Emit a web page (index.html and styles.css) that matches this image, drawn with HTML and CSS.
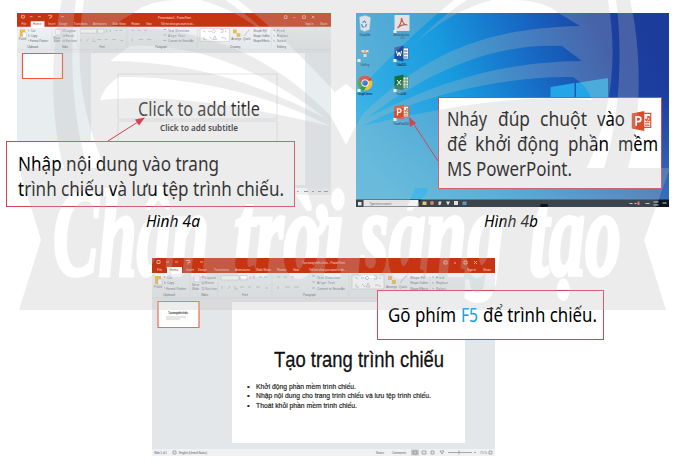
FILE: index.html
```html
<!DOCTYPE html>
<html lang="vi">
<head>
<meta charset="utf-8">
<title>Hình 4</title>
<link rel="stylesheet" href="styles.css">
</head>
<body>
<svg class="defs" width="0" height="0" aria-hidden="true">
  <defs>
    <linearGradient id="sky" x1="0" y1="0.6" x2="1" y2="0.35">
      <stop offset="0" stop-color="#3db4e6"/><stop offset=".35" stop-color="#189bdf"/><stop offset=".62" stop-color="#1769c4"/><stop offset=".85" stop-color="#1a41a3"/><stop offset="1" stop-color="#1c3c9c"/>
    </linearGradient>
    <linearGradient id="glow" x1="0" y1="0" x2="0" y2="1">
      <stop offset=".4" stop-color="#6fd0ee" stop-opacity="0"/><stop offset="1" stop-color="#6fd0ee" stop-opacity=".35"/>
    </linearGradient>
    <linearGradient id="paper" x1="0" y1="0" x2="0" y2="1">
      <stop offset="0" stop-color="#f4f8fa"/><stop offset="1" stop-color="#e3e6e8"/>
    </linearGradient>
    <symbol id="ppt" viewBox="0 0 18 18">
      <path fill="#fff" stroke="#d35230" d="M9 2.5h7.500v12H9z"/>
      <path fill="#d94b2b" d="M0 2.500 11 .5v17L0 15.500z"/>
      <path fill="none" stroke="#d35230" d="M11.500 10.500h4M11.500 12.500h4M12 7.500a2 2 0 1 0 2-2.500v2.500z"/>
      <path fill="none" stroke="#fff" stroke-width="1.500" d="M4 13V5.500h2a2 2 0 0 1 0 4H4"/>
    </symbol>
    <symbol id="ribbon" viewBox="0 0 343 44">
      <path fill="url(#paper)" d="M0 0h343v44H0z"/>
      <path fill="#c63512" d="M0 0h343v15H0z"/>
      <path fill="#fff" d="M15 9h15v7H15z"/>
      <g fill="none" stroke="#f6c3b2" stroke-width=".8">
        <path d="M5 2.500h3v3H5zM14 4h3M23 4h3M34 2.500h4v2h-2v2M48 4h3M292 3h3v3h-3zM302 5h2M312 3h3v3h-3zM322 3l3 3M325 3l-3 3"/>
      </g>
      <g class="tiny light">
        <text x="5" y="12.800">File</text><text x="34" y="12.800" textLength="8">Insert</text>
        <text x="46" y="12.800" textLength="9">Design</text><text x="62" y="12.800" textLength="15">Transitions</text>
        <text x="83" y="12.800" textLength="15">Animations</text><text x="104" y="12.800" textLength="15">Slide Show</text>
        <text x="125" y="12.800" textLength="9">Review</text><text x="141" y="12.800" textLength="6">View</text>
        <text x="157" y="12.800" textLength="37">Tell me what you want to do...</text>
        <text x="315" y="12.800" textLength="9">Sign in</text><text x="331" y="12.800" textLength="8">Share</text>
      </g>
      <text class="tiny" fill="#ca3513" x="17.500" y="13.200" textLength="9">Home</text>
      <path fill="#e8bb55" d="M3 18h6v8H3zM236 18h4v4h-4zM240 22h4v4h-4z"/>
      <path fill="#fff" stroke="#aaa" stroke-width=".4" d="M6 21h4v6H6zM42 18h6v6h-6zM69 17.500h18v4.500H69zM88 17.500h7v4.500h-7zM200 17h32v14h-32z"/>
      <g fill="none" stroke="#7f91a3" stroke-width=".6" opacity=".8">
        <path d="M50 18h2v2h-2zM50 24h2v2h-2zM50 29.500h2v2h-2zM98 18v3M102 18v3M107 19h3M112 19h3M125 19h3M132 19h3M139 19h3M70 28v3M76 31l2-3M83 28v3h3M88 29h4M96 29h3M104 29h4M113 30h3M126 28v3M133 29h5M142 29h5"/>
        <path d="M203 19l3 2M209 20h3M215 18l2 2-2 2-2-2zM222 18h3v3h-3M204 26v3h3M210 26l3 3M216 25l2 4h-4zM223 27h4M254 18l-6 7M228 19v2M228 27v2"/>
        <path stroke="#2f73b5" d="M12 18l1 2M12 24h1v2M12 30h1M280 19h2M280 24l2 2M280 30l2 1M160 18h3M160 24h3M160 30h3"/>
      </g>
      <g class="tiny grey">
        <text x="2" y="29.500">Paste</text><text x="15" y="20.500" textLength="5">Cut</text><text x="15" y="26" textLength="7">Copy</text><text x="14" y="31.500" textLength="20">Format Painter</text>
        <text x="40" y="28" textLength="7">New</text><text x="40" y="32" textLength="7">Slide</text><text x="53" y="20.500" textLength="11">Layout</text><text x="53" y="26" textLength="9">Reset</text><text x="53" y="31.500" textLength="12">Section</text>
        <text x="165" y="20.500" textLength="23">Text Direction</text><text x="165" y="26" textLength="18">Align Text</text><text x="165" y="31.500" textLength="28">Convert to SmartArt</text>
        <text x="234" y="30" textLength="11">Arrange</text><text x="247" y="30" textLength="8">Quick</text><text x="258" y="20.500" textLength="15">Shape Fill</text><text x="258" y="26" textLength="18">Shape Outline</text><text x="258" y="31.500" textLength="18">Shape Effects</text>
        <text x="284" y="20.500" textLength="8">Find</text><text x="284" y="26" textLength="12">Replace</text><text x="284" y="31.500" textLength="10">Select</text>
        <text x="11" y="38" textLength="12">Clipboard</text><text x="49" y="38" textLength="7">Slides</text><text x="90" y="38" textLength="6">Font</text><text x="151" y="38" textLength="13">Paragraph</text><text x="233" y="38" textLength="11">Drawing</text><text x="284" y="38" textLength="10">Editing</text>
      </g>
      <path stroke="#d2d6d9" stroke-width=".5" d="M38 17v21M66 17v21M120 17v21M197 17v21M278 17v21M0 40h343"/>
    </symbol>
  </defs>
</svg>

<main class="page">
  <div class="pair">
    <figure class="fig fig-a">
      <svg class="shot" width="314" height="182" viewBox="17 13 314 182">
        <path fill="#e8eef0" d="M17 13h314v182H17z"/>
        <path fill="#fff" d="M91 53h214v132H91z"/>
        <svg x="17" y="13" width="314" height="40.300"><use href="#ribbon"/></svg>
        <text class="tiny light" x="158" y="18.500" textLength="33">Presentation1 - PowerPoint</text>
        <path fill="#fff" stroke="#f2593c" stroke-width="1.200" d="M22.500 53.500h40v25h-40z"/>
        <path fill="none" stroke="#dcdfe1" stroke-width=".8" d="M118 74h159v45H118zM118 121h159v40H118z"/>
        <text class="myriad" x="138" y="116" font-size="19.500" fill="#2a2a2a" textLength="122" lengthAdjust="spacingAndGlyphs">Click to add title</text>
        <text class="myriad" x="160" y="131" font-size="9.500" font-weight="600" fill="#222" textLength="78" lengthAdjust="spacingAndGlyphs">Click to add subtitle</text>
        <path fill="#eef0f1" d="M17 188h314v7H17z"/>
        <path stroke="#999" d="M297 191.500h1.500M304 191.500h4M312 191.500h2M318 191.500h3M324 191.500h4"/>
      </svg>
      <div class="callout callout-a">
        <svg width="287" height="64" viewBox="7 142 287 64"><g class="myriad" font-size="19.500">
          <text x="18" y="170.500" textLength="201" lengthAdjust="spacingAndGlyphs">Nhập nội dung vào trang</text>
          <text x="18" y="195.500" textLength="266" lengthAdjust="spacingAndGlyphs">trình chiếu và lưu tệp trình chiếu.</text>
        </g></svg>
      </div>
      <figcaption><svg width="56" height="22"><text class="myriad" x="0" y="16" font-size="16.500" font-style="italic" textLength="54" lengthAdjust="spacingAndGlyphs">Hình 4a</text></svg></figcaption>
    </figure>
    <figure class="fig fig-b">
      <svg class="shot" width="313" height="194" viewBox="355.500 13 313 194">
        <path fill="url(#sky)" d="M355 13h314v194H355z"/>
        <path fill="url(#glow)" d="M355 13h314v194H355z"/>
        <path fill="#23a5e8" d="M550 87l24-4v15h-24zM575.500 83l32-5v20h-32z"/>
        <g>
          <path fill="#edf3f6" stroke="#bcc8d0" stroke-width=".5" d="M359 17l6-1.500 5 2-1 12-5 2-4-2z"/>
          <path fill="none" stroke="#2b81cc" stroke-width="1.200" d="M362 22.500l2-1.500 1.500 2M361 24l1 3h2M366 24l-1 3"/>
          <path fill="#f3f3f3" d="M394 15h15v16h-15z"/><path fill="none" stroke="#d8342b" stroke-width="1.200" d="M401 18c1 4 2 7 6 7-4-1-7 0-10 3 3-3 4-6 4-10z"/>
          <path fill="#f5e6df" d="M361 50h3v3h-3zM365 50h3v3h-3zM363 54h3v3h-3z"/><path stroke="#de7654" d="M361 52.500h2M366 52.500h2"/>
          <path fill="#fff" stroke="#285aa6" stroke-width=".7" d="M402 48h6v11h-6z"/><path stroke="#285aa6" d="M403.500 51h3.500M403.500 54h3.500M403.500 57h3.500"/><path fill="#1d4e9c" d="M394 47.500l9-2v16l-9-2z"/><path fill="none" stroke="#fff" d="M396 51l1.200 5 1.300-4 1.300 4 1.200-5"/>
          <path fill="#fff" stroke="#1b7843" stroke-width=".7" d="M402 77h6v11h-6z"/><path stroke="#1b7843" stroke-width=".8" d="M403 80h5M403 83h5M403 86h5M405.500 77v11"/><path fill="#16703c" d="M394 76.500l9-2v16l-9-2z"/><path stroke="#fff" d="M396.500 80l4 5M400.500 80l-4 5"/>
          <circle cx="364.500" cy="83" r="7.500" fill="#f2c22d"/><path fill="#dc3e30" d="M358 79a7.500 7.500 0 0 1 13.500 1.500l-7 .5-3 4z"/><path fill="#2fa04c" d="M358 79a7.500 7.500 0 0 0 5.500 11.500l3-5-5-1z"/><circle cx="364.500" cy="83" r="3.700" fill="#fff"/><circle cx="364.500" cy="83" r="2.800" fill="#3571cf"/>
          <svg x="393" y="104" width="17" height="16"><use href="#ppt"/></svg>
          <g fill="#fff"><path d="M393 30h3v3h-3zM357 59h3v3h-3zM393 59h3v3h-3zM357 89h3v3h-3zM393 89h3v3h-3zM393 118h3v3h-3z"/></g>
        </g>
        <g class="tiny" fill="#15344c">
          <text x="359" y="36" textLength="11">Recycle Bin</text><text x="393" y="36" textLength="16">Adobe Acrobat</text><text x="400" y="39">DC</text>
          <text x="360" y="65.500" textLength="9">UniKey</text><text x="396" y="65.500" textLength="10">Word 2016</text>
          <text x="357" y="95" textLength="15">Google Chrome</text><text x="396" y="95" textLength="10">Excel 2016</text>
          <text x="393" y="124.500" textLength="16">PowerPoint 2016</text>
        </g>
        <path fill="#0a1521" d="M355 199.500h314v7.500H355z"/><path fill="#f4f4f4" d="M363 200h55v6.500h-55z"/>
        <path fill="#fff" d="M357.500 202h3.500v3.500h-3.500z"/>
        <text class="tiny" x="369" y="204.500" fill="#666" textLength="22">Type here to search</text>
        <path fill="#f4c94f" d="M422 201.500h4v3.500h-4z"/><circle cx="431.500" cy="203" r="2" fill="#de6b42"/><path fill="#eee" d="M438 201.500h3l-1 3.500h-2zM445.500 201.500h4l-2 4zM453.500 201h4v4h-4z"/><path fill="#3d83cd" d="M462 201.500h4v3.500h-4z"/>
        <path stroke="#ccc" d="M629 203.500h3M634 203.500h2M645 203.500h4M653 202h5M653 205h5M662 203h4"/><path fill="#e66" d="M637 201.500h2v3.500h-2z"/>
      </svg>
      <div class="callout callout-b">
        <svg width="222" height="90" viewBox="439 98.500 222 90"><g class="myriad" font-size="19.500">
          <text y="126.500"><tspan x="447" textLength="40" lengthAdjust="spacingAndGlyphs">Nháy</tspan> <tspan x="498" textLength="32" lengthAdjust="spacingAndGlyphs">đúp</tspan> <tspan x="540" textLength="47" lengthAdjust="spacingAndGlyphs">chuột</tspan> <tspan x="597" textLength="28" lengthAdjust="spacingAndGlyphs">vào</tspan></text>
          <text y="151.500"><tspan x="447" textLength="20" lengthAdjust="spacingAndGlyphs">để</tspan> <tspan x="475" textLength="36" lengthAdjust="spacingAndGlyphs">khởi</tspan> <tspan x="517" textLength="42" lengthAdjust="spacingAndGlyphs">động</tspan> <tspan x="568" textLength="41" lengthAdjust="spacingAndGlyphs">phần</tspan> <tspan x="618" textLength="40" lengthAdjust="spacingAndGlyphs">mềm</tspan></text>
          <text x="447" y="176.500" textLength="125" lengthAdjust="spacingAndGlyphs">MS PowerPoint.</text></g>
          <svg x="631.500" y="111" width="21" height="21"><use href="#ppt"/></svg>
        </svg>
      </div>
      <figcaption><svg width="56" height="22"><text class="myriad" x="0" y="16" font-size="16.500" font-style="italic" textLength="54" lengthAdjust="spacingAndGlyphs">Hình 4b</text></svg></figcaption>
    </figure>
  </div>
  <figure class="fig fig-c">
    <svg class="shot" width="343" height="198" viewBox="152 258 343 198">
      <path fill="#e3e7e9" d="M152 258h343v198H152z"/>
      <path fill="#fff" d="M232 302h233v141H232z"/>
      <svg x="152" y="258" width="343" height="44"><use href="#ribbon"/></svg>
      <text class="tiny light" x="302" y="263.800" textLength="43">Tạo trang trình chiếu - PowerPoint</text>
      <path fill="#fff" stroke="#f2694c" stroke-width="1.200" d="M158 301.500h41v26h-41z"/>
      <text class="tiny" x="168" y="314" textLength="20" fill="#222">Tạo trang trình chiếu</text>
      <path stroke="#aaa" stroke-width=".6" d="M166 317h20M166 319h14"/>
      <text class="arial" x="274" y="367" font-size="22.500" fill="#111" stroke="#111" stroke-width=".3" textLength="170" lengthAdjust="spacingAndGlyphs">Tạo trang trình chiếu</text>
      <g class="arial" font-size="8" fill="#222" stroke="#222" stroke-width=".2">
        <text x="247" y="388.500">•</text><text x="256" y="388.500" textLength="100" lengthAdjust="spacingAndGlyphs">Khởi động phần mềm trình chiếu.</text>
        <text x="247" y="398">•</text><text x="256" y="398" textLength="175" lengthAdjust="spacingAndGlyphs">Nhập nội dung cho trang trình chiếu và lưu tệp trình chiếu.</text>
        <text x="247" y="407.800">•</text><text x="256" y="407.800" textLength="101" lengthAdjust="spacingAndGlyphs">Thoát khỏi phần mềm trình chiếu.</text>
      </g>
      <path fill="#f0f1f2" d="M152 449h343v7H152z"/>
      <g class="tiny grey"><text x="154" y="453.800" textLength="13">Slide 1 of 1</text><text x="179" y="453.800" textLength="28">English (United States)</text><text x="376" y="453.800" textLength="8">Notes</text><text x="392" y="453.800" textLength="14">Comments</text><text x="480" y="453.800" textLength="7">71%</text></g>
      <path fill="#c9cdcf" d="M411 449.500h8v6h-8z"/>
      <path fill="none" stroke="#888" stroke-width=".7" d="M173 451h3v3h-3zM413 451h4v3h-4zM422 451h4v3h-4zM431 451h3v3h-3zM440 451h4l-2 3zM448 452.500h24M459 450.500v4M474 452.500h2M489 451h3v3h-3z"/>
    </svg>
    <div class="callout callout-c">
      <svg width="225" height="48" viewBox="378 291 225 48"><text class="myriad" y="321.500" font-size="19.500"><tspan x="388" textLength="68" lengthAdjust="spacingAndGlyphs">Gõ phím</tspan> <tspan x="461" fill="#00a5ee" textLength="17" lengthAdjust="spacingAndGlyphs">F5</tspan> <tspan x="483" textLength="114" lengthAdjust="spacingAndGlyphs">để trình chiếu.</tspan></text></svg>
    </div>
  </figure>

  <svg class="watermark" width="675" height="461" viewBox="0 0 675 461">
    <defs>
      <g id="half">
        <path fill="#fff" d="M62 0C50 50 50 120 64 168H88C72 120 69 50 76 0z"/>
        <path fill="#fff" d="M84 0C74 60 80 110 105 168H346V145C320 92 280 35 225 0z"/>
        <path fill="#fff" d="M238 0C275 30 305 60 335 92L346 84V0z"/>
        <g fill="#000"><path d="M112 26L135 12Q150 0 180 0H200C260 15 310 70 333 118C270 55 210 28 112 26z"/>
        <path d="M110 61L130 46C200 42 270 75 325 118C250 80 190 62 110 61z"/>
        <path d="M100 100Q105 85 119 77C190 76 270 95 330 126C240 105 170 94 100 100z"/></g>
      </g>
      <mask id="emblem" maskUnits="userSpaceOnUse" x="0" y="0" width="675" height="461">
        <use href="#half"/><use href="#half" transform="matrix(-1 0 0 1 692 0)"/>
        <path fill="#fff" d="M19 168H670L644 240 666 310H19L41 240z"/>
        <g class="script" font-size="122" stroke="#000" stroke-width="4">
          <text x="53" y="275" textLength="156" lengthAdjust="spacingAndGlyphs">Chân</text>
          <text x="234" y="275" textLength="110" lengthAdjust="spacingAndGlyphs">trời</text>
          <text x="360" y="275" textLength="144" lengthAdjust="spacingAndGlyphs">sáng</text>
          <text x="529" y="275" textLength="92" lengthAdjust="spacingAndGlyphs">tạo</text>
        </g>
      </mask>
    </defs>
    <path fill="#b9b9bb" fill-opacity=".28" mask="url(#emblem)" d="M0 0h675v461H0z"/>
    <g stroke="#d64353" fill="#d64353"><path d="M108 141L141 120M438 161L413 123"/><path stroke="none" d="M145 117.500l-10 2 4 6zM409 117l1 10 6-4z"/></g>
  </svg>
</main>
</body>
</html>
```
FILE: styles.css
```css
body {
  margin: 0;
  background: #fff;
}

.defs {
  position: absolute;
}

.page {
  position: relative;
  box-sizing: border-box;
  width: 675px;
  height: 461px;
  padding-top: 13px;
  overflow: hidden;
}

.pair {
  display: flex;
  gap: 24.5px;
  height: 245px;
  padding-left: 17px;
}

.fig {
  position: relative;
  display: flex;
  flex-direction: column;
  align-items: center;
  margin: 0;
}

.fig-a { width: 314px; }
.fig-b { width: 313px; }
.fig-c { width: 343px; margin-left: 152px; }

svg {
  display: block;
}

.callout svg,
figcaption svg {
  overflow: visible;
}

.fig-a figcaption { margin-top: 16px; }
.fig-b figcaption { margin-top: 4px; }

/* Notes laid over the screenshots */
.callout {
  position: absolute;
  border: 1px solid #d64353;
  background: #fff;
}

.callout-a { left: -11px; top: 128px; }
.callout-b { left: 82.5px; top: 84px; }
.callout-c { left: 225px; top: 32px; }

.myriad {
  font-family: "Noto Sans", "Open Sans", sans-serif;
}

.arial {
  font-family: "Liberation Sans", sans-serif;
}

.tiny {
  font-family: "Liberation Sans", sans-serif;
  font-size: 3.2px;
}

.light { fill: #f8cfc2; }
.grey { fill: #667079; }

.script {
  font-family: "Liberation Serif", serif;
  font-style: italic;
  font-weight: bold;
}

.watermark {
  position: absolute;
  inset: 0;
  pointer-events: none;
}
```
